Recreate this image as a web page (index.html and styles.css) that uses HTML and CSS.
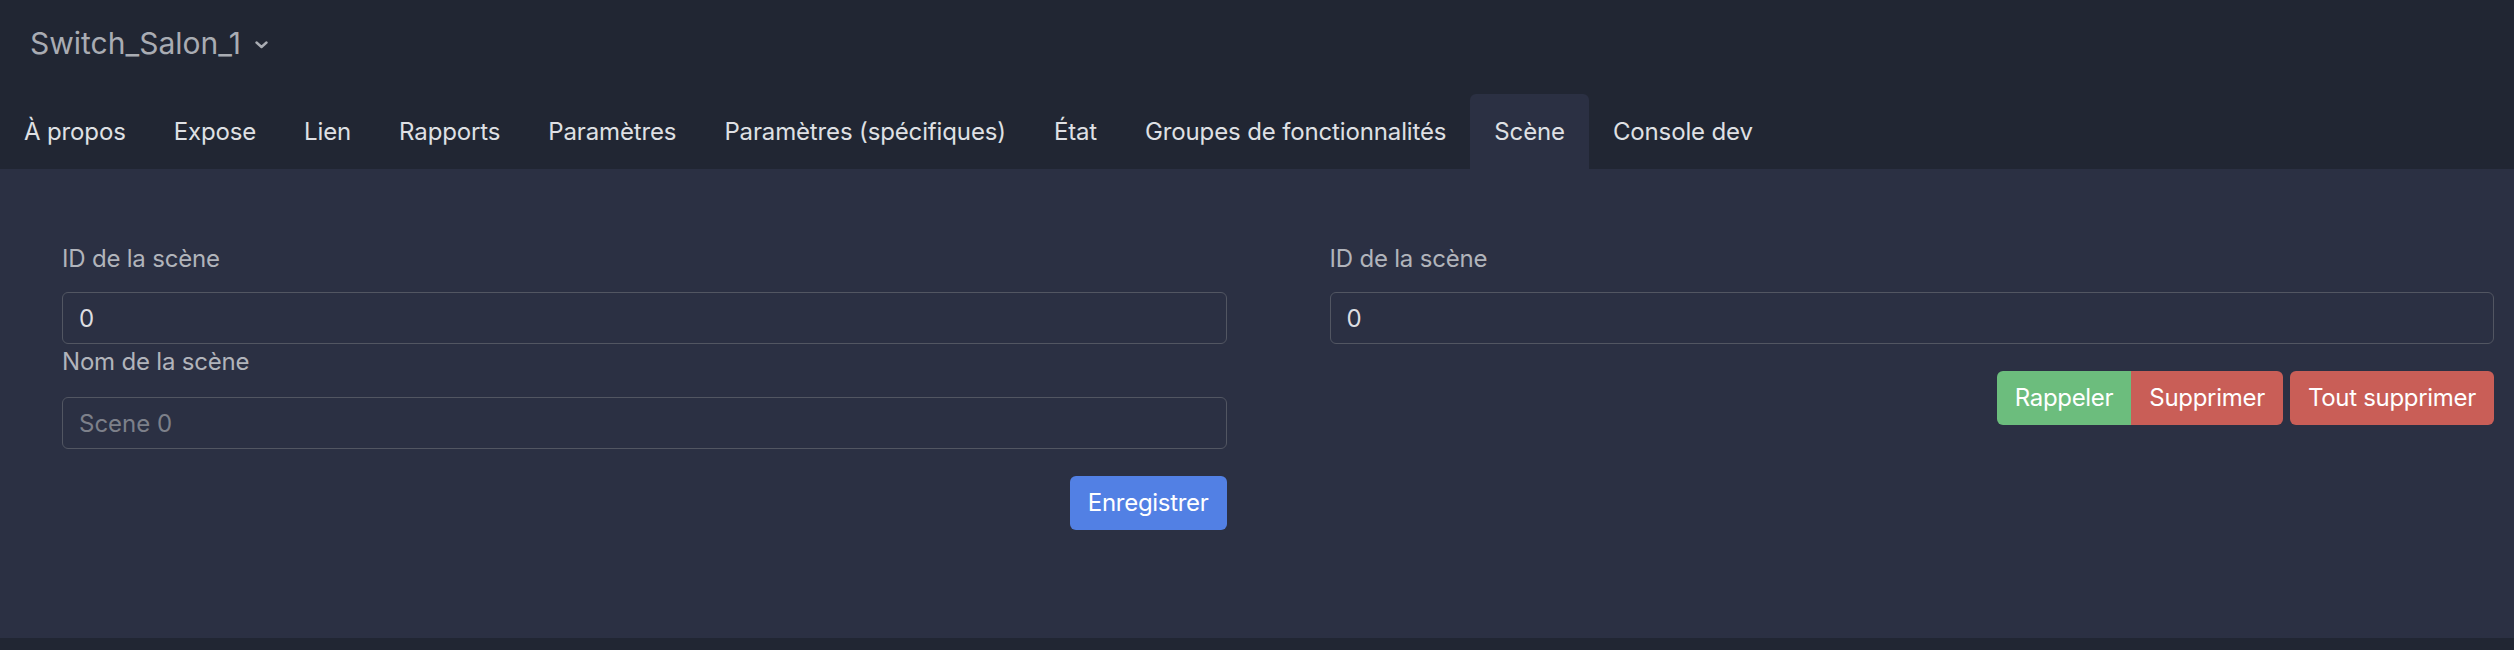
FILE: index.html
```html
<!DOCTYPE html>
<html lang="fr">
<head>
<meta charset="utf-8">
<title>Switch_Salon_1</title>
<link rel="stylesheet" href="styles.css">
</head>
<body>
<header class="header">
  <div class="title">
    <span>Switch_Salon_1</span>
    <svg class="chevron" width="13" height="8" viewBox="0 0 13 8"><path d="M1.5 1.5 L6.5 6 L11.5 1.5" fill="none" stroke="#a9acb3" stroke-width="2.4" stroke-linecap="round" stroke-linejoin="round"/></svg>
  </div>
  <nav class="tabs">
    <a class="tab">À propos</a>
    <a class="tab">Expose</a>
    <a class="tab">Lien</a>
    <a class="tab">Rapports</a>
    <a class="tab">Paramètres</a>
    <a class="tab">Paramètres (spécifiques)</a>
    <a class="tab">État</a>
    <a class="tab">Groupes de fonctionnalités</a>
    <a class="tab active">Scène</a>
    <a class="tab">Console dev</a>
  </nav>
</header>
<main class="panel">
  <section class="col">
    <label class="label">ID de la scène</label>
    <input class="input" type="text" value="0">
    <label class="label label-second">Nom de la scène</label>
    <input class="input" type="text" placeholder="Scene 0">
    <div class="actions actions-left">
      <button class="btn btn-blue">Enregistrer</button>
    </div>
  </section>
  <section class="col">
    <label class="label">ID de la scène</label>
    <input class="input" type="text" value="0">
    <div class="actions actions-right">
      <div class="btn-group">
        <button class="btn btn-green">Rappeler</button>
        <button class="btn btn-red">Supprimer</button>
      </div>
      <button class="btn btn-red single">Tout supprimer</button>
    </div>
  </section>
</main>
<div class="bottom"></div>
</body>
</html>
```
FILE: styles.css
```css
* { box-sizing: border-box; }
html, body {
  margin: 0;
  padding: 0;
  background: #212633;
  font-family: Inter, "Noto Sans", sans-serif;
  height: 650px;
  overflow: hidden;
}
.header {
  padding: 21px 0 0 0;
}
.title {
  display: flex;
  align-items: center;
  gap: 14px;
  padding-left: 30px;
  font-size: 30px;
  line-height: 45px;
  color: #a9acb3;
}
.chevron { margin-top: 2px; }
.tabs {
  display: flex;
  margin-top: 28px;
}
.tab {
  padding: 19.5px 24px;
  font-size: 24px;
  line-height: 36px;
  letter-spacing: -0.14px;
  color: #dfe0e4;
  border-radius: 6px 6px 0 0;
  white-space: nowrap;
}
.tab.active {
  background: #2b3043;
}
.panel {
  background: #2b3043;
  height: 469px;
  padding: 72px 20px 0 62px;
  display: grid;
  grid-template-columns: 1fr 1fr;
  column-gap: 103px;
  align-items: start;
}
.col {
  display: flex;
  flex-direction: column;
}
.label {
  font-size: 24px;
  line-height: 36px;
  letter-spacing: -0.2px;
  color: #b1b4bb;
  margin-bottom: 15px;
}
.label-second { margin-bottom: 17px; }
.input {
  height: 52px;
  width: 100%;
  margin: 0;
  padding: 7px 16px;
  font-family: Inter, "Noto Sans", sans-serif;
  font-size: 24px;
  line-height: 36px;
  color: #dcdde1;
  background: #2b3043;
  border: 1px solid #525662;
  border-radius: 6px;
  outline: none;
}
.input::placeholder { color: #7d808a; }
.actions {
  display: flex;
  justify-content: flex-end;
}
.actions-left { margin-top: 27px; }
.actions-right { margin-top: 27px; gap: 7px; }
.btn-group { display: flex; }
.btn {
  font-family: Inter, "Noto Sans", sans-serif;
  font-size: 24px;
  line-height: 36px;
  letter-spacing: -0.3px;
  padding: 9px 18px;
  border: none;
  border-radius: 6px;
  color: #ffffff;
  margin: 0;
}
.btn-blue { background: #5280e4; }
.btn-green { background: #6cbd7d; }
.btn-red { background: #c95e57; }
.btn-group .btn-green { border-radius: 6px 0 0 6px; }
.btn-group .btn-red { border-radius: 0 6px 6px 0; }
.bottom {
  height: 12px;
  background: #212633;
}
```
